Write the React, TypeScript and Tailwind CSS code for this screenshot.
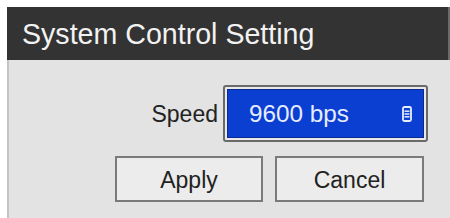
export default function App() {
  const font = { fontFamily: '"Liberation Sans", Arial, sans-serif' };
  return (
    <div className="w-[450px] h-[218px] bg-white pt-[7px] pl-[7px] overflow-hidden" style={font}>
      <div className="h-[53px] bg-[#333333] flex items-center pl-[15px] border-r-2 border-[#6a6a6a]">
        <span className="text-[28.6px] leading-none text-[#f2f2f2] pt-[2px]">System Control Setting</span>
      </div>
      <div className="h-[158px] bg-[#e3e3e3] border-l-2 border-[#c4c4c4] flex flex-col items-end pr-[22px]">
        <div className="mt-[25px] flex items-center">
          <span className="text-[23px] leading-none text-[#222] mr-[5px] pt-[2px]">Speed</span>
          <div className="w-[205px] h-[57px] rounded-[3px] border-2 border-[#6a6a6a] bg-[#e9e9e9] p-[2px]">
            <div className="h-full w-full bg-[#0a3fd2] border border-[#0a2a90] flex items-center pl-[21px] pr-[10px]">
              <span className="text-[24.3px] leading-none text-[#e6ecff] pt-[2px] flex-1">9600 bps</span>
              <svg width="10" height="16" viewBox="0 0 10 16" className="mr-[1px]">
                <rect x="1" y="1" width="8" height="14" rx="1.5" fill="none" stroke="#e8eeff" strokeWidth="1.8" />
                <line x1="2.5" y1="5.2" x2="7.5" y2="5.2" stroke="#e8eeff" strokeWidth="1.5" />
                <line x1="2.5" y1="8" x2="7.5" y2="8" stroke="#e8eeff" strokeWidth="1.5" />
                <line x1="2.5" y1="10.8" x2="7.5" y2="10.8" stroke="#e8eeff" strokeWidth="1.5" />
              </svg>
            </div>
          </div>
        </div>
        <div className="mt-[14px] mr-[4px] flex gap-[12px]">
          <button className="w-[148px] h-[46px] border-2 border-[#7a7a7a] bg-[#ececec] text-[23px] leading-none text-[#222] flex items-center justify-center pt-[2px]">
            Apply
          </button>
          <button className="w-[149px] h-[46px] border-2 border-[#7a7a7a] bg-[#ececec] text-[23px] leading-none text-[#222] flex items-center justify-center pt-[2px]">
            Cancel
          </button>
        </div>
      </div>
    </div>
  );
}
